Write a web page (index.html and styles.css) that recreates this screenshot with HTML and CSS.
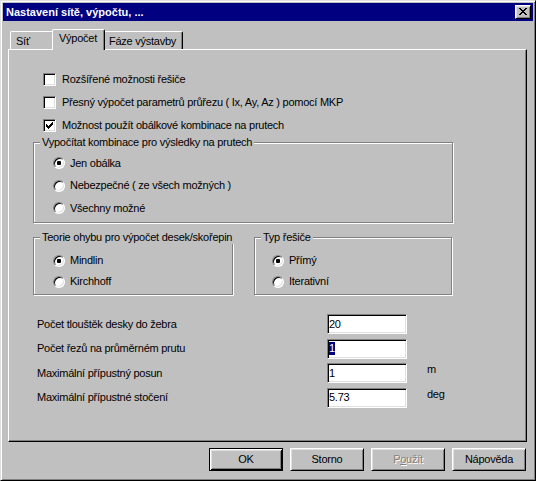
FILE: index.html
```html
<!DOCTYPE html>
<html lang="cs">
<head>
<meta charset="utf-8">
<title>Nastavení sítě, výpočtu</title>
<link rel="stylesheet" href="styles.css">
</head>
<body>
<div class="window">
  <div class="titlebar">
    <span class="title">Nastavení sítě, výpočtu, ...</span>
    <div class="close">
      <svg width="8" height="7" viewBox="0 0 8 7" shape-rendering="crispEdges"><path fill="#000" d="M0 0h2v1H0zM6 0h2v1H6zM1 1h2v1H1zM5 1h2v1H5zM2 2h4v1H2zM3 3h2v1H3zM2 4h4v1H2zM1 5h2v1H1zM5 5h2v1H5zM0 6h2v1H0zM6 6h2v1H6z"/></svg>
    </div>
  </div>

  <div class="tabs">
    <div class="tab tab-sit">Síť</div>
    <div class="tab tab-vypocet active">Výpočet</div>
    <div class="tab tab-faze">Fáze výstavby</div>
  </div>

  <div class="panel">
    <div class="checks">
      <div class="check-row"><span class="checkbox"></span><span>Rozšířené možnosti řešiče</span></div>
      <div class="check-row"><span class="checkbox"></span><span>Přesný výpočet parametrů průřezu ( Ix, Ay, Az ) pomocí MKP</span></div>
      <div class="check-row"><span class="checkbox"><svg width="7" height="7" viewBox="0 0 7 7" shape-rendering="crispEdges"><path fill="#000" d="M6 0h1v1H6zM5 1h2v1H5zM0 2h1v1H0zM4 2h3v1H4zM0 3h2v1H0zM3 3h3v1H3zM0 4h5v1H0zM1 5h3v1H1zM2 6h1v1H2z"/></svg></span><span>Možnost použít obálkové kombinace na prutech</span></div>
    </div>

    <div class="group group-comb">
      <div class="legend">Vypočítat kombinace pro výsledky na prutech</div>
      <div class="options">
        <div class="radio-row"><span class="radio checked"></span><span>Jen obálka</span></div>
        <div class="radio-row"><span class="radio"></span><span>Nebezpečné ( ze všech možných )</span></div>
        <div class="radio-row"><span class="radio"></span><span>Všechny možné</span></div>
      </div>
    </div>

    <div class="groups-row">
      <div class="group group-theory">
        <div class="legend">Teorie ohybu pro výpočet desek/skořepin</div>
        <div class="options">
          <div class="radio-row"><span class="radio checked"></span><span>Mindlin</span></div>
          <div class="radio-row"><span class="radio"></span><span>Kirchhoff</span></div>
        </div>
      </div>
      <div class="group group-solver">
        <div class="legend">Typ řešiče</div>
        <div class="options">
          <div class="radio-row"><span class="radio checked"></span><span>Přímý</span></div>
          <div class="radio-row"><span class="radio"></span><span>Iterativní</span></div>
        </div>
      </div>
    </div>

    <div class="fields">
      <span class="label">Počet tlouštěk desky do žebra</span>
      <div class="edit">20</div>
      <span class="unit"></span>

      <span class="label">Počet řezů na průměrném prutu</span>
      <div class="edit"><span class="selected">1</span></div>
      <span class="unit"></span>

      <span class="label">Maximální přípustný posun</span>
      <div class="edit">1</div>
      <span class="unit">m</span>

      <span class="label">Maximální přípustné stočení</span>
      <div class="edit">5.73</div>
      <span class="unit">deg</span>
    </div>
  </div>

  <div class="buttons">
    <div class="btn btn-default">OK</div>
    <div class="btn">Storno</div>
    <div class="btn btn-disabled">P<u>o</u>užít</div>
    <div class="btn">Nápověda</div>
  </div>
</div>
</body>
</html>
```

FILE: styles.css
```css
* {
  box-sizing: border-box;
}

html, body {
  margin: 0;
  padding: 0;
}

body {
  font-family: "Liberation Sans", Arial, sans-serif;
  font-size: 11px;
  line-height: 13px;
  letter-spacing: -0.25px;
  color: #000;
  background: #c0c0c0;
}

.window {
  width: 536px;
  height: 481px;
  background: #c0c0c0;
  border: 1px solid;
  border-color: #dfdfdf #000 #000 #dfdfdf;
  box-shadow: inset 1px 1px 0 #fff, inset -1px -1px 0 #808080;
  padding: 2px;
  display: flex;
  flex-direction: column;
}

/* title bar */
.titlebar {
  height: 18px;
  flex-shrink: 0;
  background: #000080;
  display: flex;
  align-items: center;
  justify-content: space-between;
  padding: 0 2px 0 3px;
}

.title {
  color: #fff;
  font-weight: bold;
  letter-spacing: 0;
}

.close {
  width: 16px;
  height: 14px;
  background: #c0c0c0;
  border: 1px solid;
  border-color: #fff #000 #000 #fff;
  box-shadow: inset 1px 1px 0 #dfdfdf, inset -1px -1px 0 #808080;
  display: flex;
  align-items: center;
  justify-content: center;
}

.close svg {
  display: block;
  margin: 0 1px 1px 0;
}

/* tabs */
.tabs {
  display: flex;
  align-items: flex-end;
  height: 20px;
  margin-top: 8px;
  padding-left: 7px;
  flex-shrink: 0;
}

.tab {
  height: 18px;
  background: #c0c0c0;
  border-top: 1px solid #fff;
  border-left: 1px solid #fff;
  border-right: 1px solid #000;
  border-top-left-radius: 2px;
  border-top-right-radius: 2px;
  box-shadow: inset -1px 0 0 #808080;
  padding: 3px 0 0 5px;
  white-space: nowrap;
}

.tab-sit {
  width: 44px;
}

.tab-vypocet {
  width: 49px;
}

.tab-faze {
  width: 80px;
}

.tab.active {
  width: 53px;
  height: 21px;
  margin: 0 -2px -1px;
  padding: 2px 0 0 6px;
  position: relative;
  z-index: 1;
}

/* panel */
.panel {
  height: 393px;
  flex-shrink: 0;
  margin: 0 6px 0 5px;
  border: 1px solid;
  border-color: #fff #000 #000 #fff;
  box-shadow: inset -1px -1px 0 #808080;
  padding-top: 18px;
}

.check-row {
  display: flex;
  align-items: center;
  gap: 6px;
  height: 23px;
  padding-left: 34px;
}

.checkbox {
  width: 13px;
  height: 13px;
  flex-shrink: 0;
  background: #fff;
  border: 1px solid;
  border-color: #808080 #fff #fff #808080;
  box-shadow: inset 1px 1px 0 #000, inset -1px -1px 0 #dfdfdf;
  display: flex;
  align-items: center;
  justify-content: center;
}

.checkbox svg {
  display: block;
}

/* group boxes */
.group {
  border: 1px solid #808080;
  box-shadow: inset 1px 1px 0 #fff, 1px 1px 0 #fff;
}

.legend {
  margin: -7px 0 0 6px;
  padding: 0 2px;
  height: 13px;
  width: max-content;
  background: #c0c0c0;
}

.group-comb {
  width: 420px;
  height: 81px;
  margin: 5px 0 0 24px;
}

.group-comb .options {
  padding-top: 3px;
}

.group-comb .radio-row {
  height: 22.5px;
  padding-left: 19px;
}

.groups-row {
  display: flex;
  gap: 21px;
  margin: 14px 0 0 24px;
}

.group-theory {
  width: 200px;
  height: 58px;
}

.group-solver {
  width: 198px;
  height: 58px;
}

.group-theory .options,
.group-solver .options {
  padding-top: 6px;
}

.group-theory .radio-row {
  height: 21px;
  padding-left: 19px;
}

.group-solver .radio-row {
  height: 21px;
  padding-left: 17px;
}

.radio-row {
  display: flex;
  align-items: center;
  gap: 5px;
}

.radio {
  width: 12px;
  height: 12px;
  flex-shrink: 0;
  border-radius: 50%;
  background: #fff;
  border: 1px solid;
  border-color: #808080 #fff #fff #808080;
  box-shadow: inset 1px 1px 0 #000, inset -1px -1px 0 #dfdfdf;
  display: flex;
  align-items: center;
  justify-content: center;
}

.radio.checked::after {
  content: "";
  width: 4px;
  height: 4px;
  border-radius: 1px;
  background: #000;
}

/* fields */
.fields {
  display: grid;
  grid-template-columns: 270px 80px auto;
  column-gap: 20px;
  row-gap: 4.67px;
  align-items: center;
  margin: 19px 0 0 28px;
}

.edit {
  height: 20px;
  background: #fff;
  border: 1px solid;
  border-color: #808080 #fff #fff #808080;
  box-shadow: inset 1px 1px 0 #000, inset -1px -1px 0 #dfdfdf;
  padding-left: 1px;
  display: flex;
  align-items: center;
}

.selected {
  background: #000080;
  color: #fff;
}

.unit {
  align-self: start;
}

/* buttons */
.buttons {
  display: flex;
  justify-content: flex-end;
  gap: 7px;
  margin-top: 6px;
  padding-right: 7px;
}

.btn {
  width: 74px;
  height: 23px;
  border: 1px solid;
  border-color: #fff #000 #000 #fff;
  box-shadow: inset 1px 1px 0 #dfdfdf, inset -1px -1px 0 #808080;
  display: flex;
  align-items: center;
  justify-content: center;
}

.btn-default {
  border-color: #000;
  box-shadow: inset 1px 1px 0 #fff, inset -1px -1px 0 #000, inset 2px 2px 0 #dfdfdf, inset -2px -2px 0 #808080;
}

.btn-disabled {
  color: #808080;
  text-shadow: 1px 1px 0 #fff;
}
```
